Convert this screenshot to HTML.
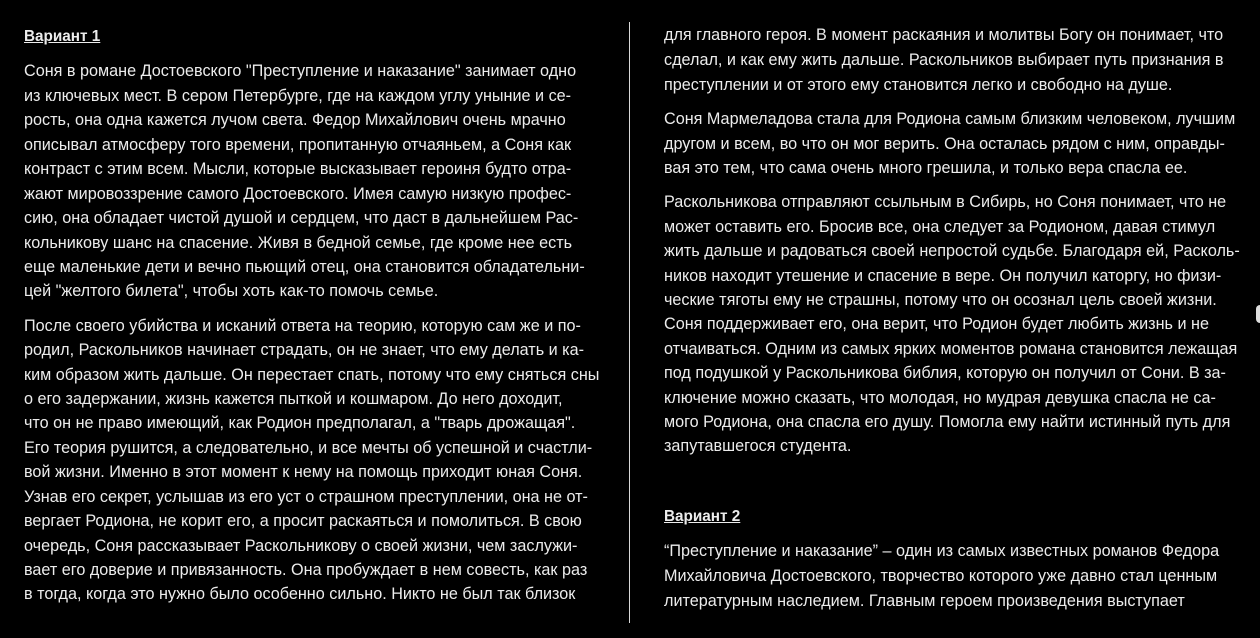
<!DOCTYPE html>
<html><head><meta charset="utf-8"><style>
html,body{margin:0;padding:0;background:#000;width:1260px;height:638px;overflow:hidden}
body{position:relative;font-family:"Liberation Sans","DejaVu Sans",sans-serif;font-size:16.2px;color:#ececec}
.l{position:absolute;white-space:nowrap;line-height:24px;height:24px}
.h{font-weight:bold;text-decoration:underline;font-size:15.3px}
.d{position:absolute;left:629px;top:22px;width:1px;height:601px;background:#d8d8d8}
.dot{position:absolute;left:1256px;top:305px;width:8px;height:18px;border-radius:4px;background:#ddd}
</style></head><body>
<div class="d"></div><div class="dot"></div>
<div class="l h" style="left:24px;top:25px">Вариант 1</div>
<div class="l" style="left:24px;top:59px">Соня в романе Достоевского "Преступление и наказание" занимает одно</div>
<div class="l" style="left:24px;top:84px">из ключевых мест. В сером Петербурге, где на каждом углу уныние и се-</div>
<div class="l" style="left:24px;top:108px">рость, она одна кажется лучом света. Федор Михайлович очень мрачно</div>
<div class="l" style="left:24px;top:133px">описывал атмосферу того времени, пропитанную отчаяньем, а Соня как</div>
<div class="l" style="left:24px;top:157px">контраст с этим всем. Мысли, которые высказывает героиня будто отра-</div>
<div class="l" style="left:24px;top:182px">жают мировоззрение самого Достоевского. Имея самую низкую профес-</div>
<div class="l" style="left:24px;top:206px">сию, она обладает чистой душой и сердцем, что даст в дальнейшем Рас-</div>
<div class="l" style="left:24px;top:231px">кольникову шанс на спасение. Живя в бедной семье, где кроме нее есть</div>
<div class="l" style="left:24px;top:255px">еще маленькие дети и вечно пьющий отец, она становится обладательни-</div>
<div class="l" style="left:24px;top:279px">цей "желтого билета", чтобы хоть как-то помочь семье.</div>
<div class="l" style="left:24px;top:314px">После своего убийства и исканий ответа на теорию, которую сам же и по-</div>
<div class="l" style="left:24px;top:338px">родил, Раскольников начинает страдать, он не знает, что ему делать и ка-</div>
<div class="l" style="left:24px;top:363px">ким образом жить дальше. Он перестает спать, потому что ему сняться сны</div>
<div class="l" style="left:24px;top:387px">о его задержании, жизнь кажется пыткой и кошмаром. До него доходит,</div>
<div class="l" style="left:24px;top:411px">что он не право имеющий, как Родион предполагал, а "тварь дрожащая".</div>
<div class="l" style="left:24px;top:436px">Его теория рушится, а следовательно, и все мечты об успешной и счастли-</div>
<div class="l" style="left:24px;top:460px">вой жизни. Именно в этот момент к нему на помощь приходит юная Соня.</div>
<div class="l" style="left:24px;top:485px">Узнав его секрет, услышав из его уст о страшном преступлении, она не от-</div>
<div class="l" style="left:24px;top:509px">вергает Родиона, не корит его, а просит раскаяться и помолиться. В свою</div>
<div class="l" style="left:24px;top:534px">очередь, Соня рассказывает Раскольникову о своей жизни, чем заслужи-</div>
<div class="l" style="left:24px;top:558px">вает его доверие и привязанность. Она пробуждает в нем совесть, как раз</div>
<div class="l" style="left:24px;top:582px">в тогда, когда это нужно было особенно сильно. Никто не был так близок</div>

<div class="l" style="left:664px;top:23px">для главного героя. В момент раскаяния и молитвы Богу он понимает, что</div>
<div class="l" style="left:664px;top:48px">сделал, и как ему жить дальше. Раскольников выбирает путь признания в</div>
<div class="l" style="left:664px;top:73px">преступлении и от этого ему становится легко и свободно на душе.</div>
<div class="l" style="left:664px;top:107px">Соня Мармеладова стала для Родиона самым близким человеком, лучшим</div>
<div class="l" style="left:664px;top:132px">другом и всем, во что он мог верить. Она осталась рядом с ним, оправды-</div>
<div class="l" style="left:664px;top:156px">вая это тем, что сама очень много грешила, и только вера спасла ее.</div>
<div class="l" style="left:664px;top:190px">Раскольникова отправляют ссыльным в Сибирь, но Соня понимает, что не</div>
<div class="l" style="left:664px;top:215px">может оставить его. Бросив все, она следует за Родионом, давая стимул</div>
<div class="l" style="left:664px;top:239px">жить дальше и радоваться своей непростой судьбе. Благодаря ей, Расколь-</div>
<div class="l" style="left:664px;top:264px">ников находит утешение и спасение в вере. Он получил каторгу, но физи-</div>
<div class="l" style="left:664px;top:288px">ческие тяготы ему не страшны, потому что он осознал цель своей жизни.</div>
<div class="l" style="left:664px;top:312px">Соня поддерживает его, она верит, что Родион будет любить жизнь и не</div>
<div class="l" style="left:664px;top:337px">отчаиваться. Одним из самых ярких моментов романа становится лежащая</div>
<div class="l" style="left:664px;top:361px">под подушкой у Раскольникова библия, которую он получил от Сони. В за-</div>
<div class="l" style="left:664px;top:386px">ключение можно сказать, что молодая, но мудрая девушка спасла не са-</div>
<div class="l" style="left:664px;top:410px">мого Родиона, она спасла его душу. Помогла ему найти истинный путь для</div>
<div class="l" style="left:664px;top:434px">запутавшегося студента.</div>
<div class="l h" style="left:664px;top:505px">Вариант 2</div>
<div class="l" style="left:664px;top:539px">“Преступление и наказание” – один из самых известных романов Федора</div>
<div class="l" style="left:664px;top:564px">Михайловича Достоевского, творчество которого уже давно стал ценным</div>
<div class="l" style="left:664px;top:589px">литературным наследием. Главным героем произведения выступает</div>
</body></html>
